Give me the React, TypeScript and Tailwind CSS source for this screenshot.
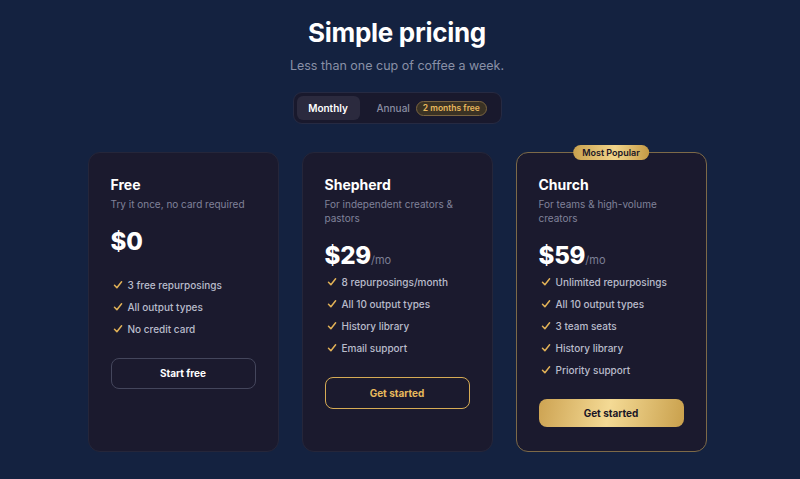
import React from "react";

type Plan = {
  name: string;
  desc: string;
  price: string;
  mo?: boolean;
  features: string[];
  cta: string;
  variant: "outline" | "gold-outline" | "gold";
  popular?: boolean;
  priceMb: string;
};

const plans: Plan[] = [
  {
    name: "Free",
    desc: "Try it once, no card required",
    price: "$0",
    features: ["3 free repurposings", "All output types", "No credit card"],
    cta: "Start free",
    variant: "outline",
    priceMb: "mb-[19px]",
  },
  {
    name: "Shepherd",
    desc: "For independent creators & pastors",
    price: "$29",
    mo: true,
    features: ["8 repurposings/month", "All 10 output types", "History library", "Email support"],
    cta: "Get started",
    variant: "gold-outline",
    priceMb: "mb-[2px]",
  },
  {
    name: "Church",
    desc: "For teams & high-volume creators",
    price: "$59",
    mo: true,
    features: ["Unlimited repurposings", "All 10 output types", "3 team seats", "History library", "Priority support"],
    cta: "Get started",
    variant: "gold",
    popular: true,
    priceMb: "mb-[2px]",
  },
];

function Check() {
  return (
    <svg width="10" height="10" viewBox="0 0 10 10" fill="none">
      <path d="M1.5 5.3 L3.9 7.8 L8.6 1.8" stroke="#e2b257" strokeWidth="1.5" strokeLinecap="round" strokeLinejoin="round" />
    </svg>
  );
}

function Card({ p }: { p: Plan }) {
  return (
    <div
      className={
        "relative w-[191px] rounded-[12px] bg-[#1b1a2e] px-[22px] pt-[22px] pb-6 flex flex-col " +
        (p.popular ? "border border-[#7d6a48]" : "border border-[#25263a]")
      }
    >
      {p.popular && (
        <div className="absolute left-1/2 -translate-x-1/2 -top-[8px] h-[15px] px-[9px] rounded-full bg-[linear-gradient(90deg,#c9a14e,#f1d48a_55%,#c49a45)] flex items-center text-[9px] font-semibold text-[#1a1626] leading-none">
          Most Popular
        </div>
      )}
      <div className="text-[14px] leading-[20px] font-bold text-white">{p.name}</div>
      <div className="mt-[2px] text-[10px] leading-[14px] text-[#80829a]">{p.desc}</div>
      <div className={"mt-[15px] flex items-baseline " + p.priceMb}>
        <span className="text-[24px] leading-[32px] font-extrabold text-white tracking-[-0.2px]">{p.price}</span>
        {p.mo && <span className="text-[11px] text-[#7c7f95]">/mo</span>}
      </div>
      <ul className="flex flex-col gap-[6px]">
        {p.features.map((f) => (
          <li key={f} className="flex items-center h-[16px] text-[10px] font-medium text-[#b9bccb]">
            <span className="w-[17px] pl-[2px] flex items-center">
              <Check />
            </span>
            {f}
          </li>
        ))}
      </ul>
      <button
        className={
          "mt-[21px] w-full rounded-[8px] text-[10px] font-bold flex items-center justify-center " +
          (p.variant === "outline"
            ? "h-[31px] border border-[#44465c] text-white"
            : p.variant === "gold-outline"
            ? "h-[32px] border-[1.5px] border-[#d6ab55] text-[#e7b95c]"
            : "h-[31px] text-[#1a1626] bg-[linear-gradient(100deg,#cda352_0%,#f4da95_48%,#c9a04c_100%)]")
        }
      >
        {p.cta}
      </button>
    </div>
  );
}

export default function App() {
  return (
    <div
      className="min-h-[479px] w-full bg-[#142240] flex flex-col items-center pt-[17px] pr-[6px]"
      style={{ fontFamily: "Inter, 'Noto Sans', sans-serif" }}
    >
      <h1 className="text-[26px] leading-[32px] font-bold text-white tracking-[-0.3px]">Simple pricing</h1>
      <p className="mt-[8px] text-[12.5px] leading-[18px] text-[#8990a6]">Less than one cup of coffee a week.</p>
      <div className="mt-[17px] h-[32px] w-[209px] rounded-[9px] border border-[#262a42] bg-[#19192d] p-[3px] flex items-center">
        <div className="h-[24px] w-[63px] rounded-[6px] bg-[#2b2a3e] flex items-center justify-center text-[10px] font-semibold text-white">
          Monthly
        </div>
        <div className="ml-[17px] text-[10px] text-[#8a8da2] font-medium">Annual</div>
        <div className="ml-[6px] h-[15px] px-[6px] rounded-full border border-[#7a6440] bg-[#3a3224] flex items-center text-[8.5px] font-semibold text-[#e8b85c] leading-none">
          2 months free
        </div>
      </div>
      <div className="mt-[28px] flex items-stretch gap-[23px] h-[300px]">
        {plans.map((p) => (
          <Card key={p.name} p={p} />
        ))}
      </div>
    </div>
  );
}
